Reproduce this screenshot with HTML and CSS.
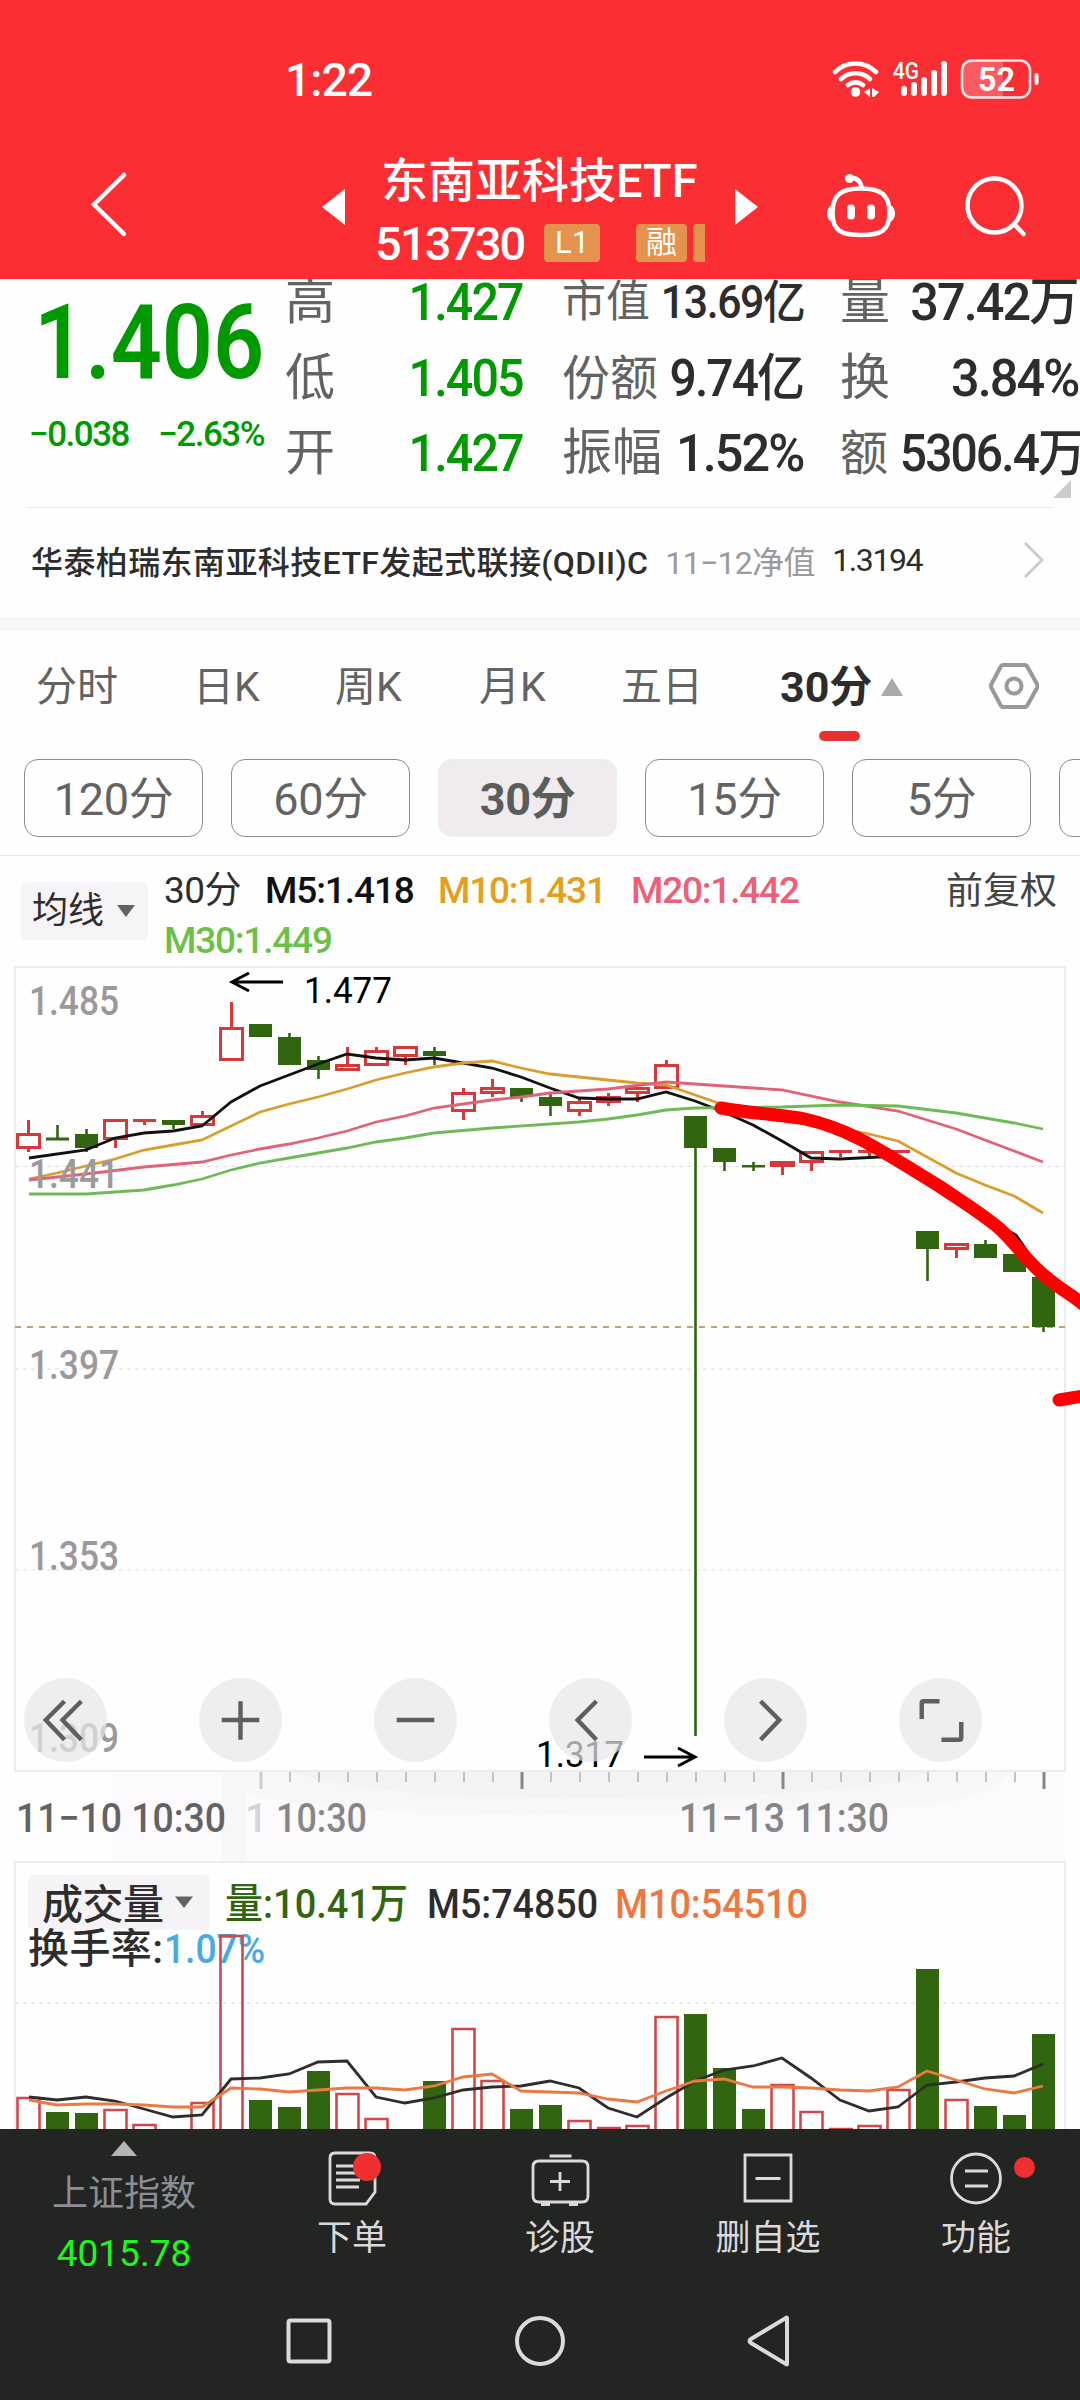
FILE: index.html
```html
<!DOCTYPE html>
<html lang="zh-CN">
    <head>
        <meta charset="utf-8">
        <title>东南亚科技ETF</title>
        <link rel="stylesheet" href="styles.css">
    </head>
    <body>
        <header class="top">
            <div class="status">
                <span class="clock">1:22</span>
                <svg class="status-icons" width="210" height="44" viewBox="830 58 210 44">
                    <g fill="none" stroke="#fff" stroke-width="4.6" stroke-linecap="round">
                        <path d="M835 72a29 29 0 0 1 41 0M841 79a21 21 0 0 1 29 0M848 85a12 12 0 0 1 15 0"/>
                        <path stroke-width="6" d="M904 89v4M914 85v8M924 80v13M934 73v20M944 64v29"/>
                    </g>
                    <circle cx="855.500" cy="92" r="4.800" fill="#fff"/>
                    <path fill="#fff" d="M864 92l6-4v9zM872 88l7 4-5 5h-2z"/>
                    <text class="net" x="893" y="79" textLength="26" lengthAdjust="spacingAndGlyphs">4G</text>
                    <path fill="#fff" fill-opacity=".22" d="M963 69q0-8 8-8h32v37h-32q-8 0-8-8z"/>
                    <rect x="962" y="60.500" width="68" height="37" rx="10" fill="none" stroke="#fff" stroke-opacity=".9" stroke-width="2.600"/>
                    <path stroke="#fff" stroke-width="4" stroke-linecap="round" d="M1036.500 75v8"/>
                    <text class="bat" x="978" y="91" textLength="37" lengthAdjust="spacingAndGlyphs">52</text>
                </svg>
            </div>
            <div class="bar">
                <svg class="back" width="44" height="70" viewBox="86 170 44 70"><path d="M124 175l-30 29.500 30 29.500"/></svg>
                <svg class="prev" width="23" height="36" viewBox="0 0 23 36"><path d="M0 18L23 0v36z"/></svg>
                <div class="title">
                    <h1>东南亚科技ETF</h1>
                    <div class="code">
                        <span class="num">513730</span>
                        <i class="tag tag-l1">L1</i>
                        <i class="tag tag-rong">融</i>
                        <i class="tag tag-cut"></i>
                    </div>
                </div>
                <svg class="next" width="23" height="36" viewBox="0 0 23 36"><path d="M23 18L0 0v36z"/></svg>
                <svg class="robot" width="72" height="70" viewBox="825 170 72 70">
                    <path d="M861 188.500c21 0 28.500 7 28.500 24.500S881 235 861 235s-28.500-4.500-28.500-22S840 188.500 861 188.500zM861.500 187c-1-6-5-9.500-12-9.500"/>
                    <path class="eye" d="M851 208.500v7M871 208.500v7"/>
                    <circle cx="849.500" cy="178.500" r="4.500"/>
                    <path class="ear" d="M833 205c-8 1-8 16 0 17zM889 205c8 1 8 16 0 17z"/>
                </svg>
                <svg class="search" width="68" height="70" viewBox="962 170 68 70"><circle cx="994.500" cy="205.500" r="27"/><path d="M1014 224l9.500 10"/></svg>
            </div>
        </header>

        <section class="quote">
            <div class="price">
                <div class="last"><span>1.406</span></div>
                <div class="chg"><span>−0.038</span><span>−2.63%</span></div>
            </div>
            <div class="cell c1"><p><em>高</em><b>1.427</b></p><p><em>低</em><b>1.405</b></p><p><em>开</em><b>1.427</b></p></div>
            <div class="cell c2"><p class="sm"><em>市值</em><b>13.69亿</b></p><p class="md"><em>份额</em><b>9.74亿</b></p><p class="wide"><em>振幅</em><b>1.52%</b></p></div>
            <div class="cell c3"><p class="wide"><em>量</em><b>37.42万</b></p><p class="wide"><em>换</em><b>3.84%</b></p><p class="md"><em>额</em><b>5306.4万</b></p></div>
            <i class="corner"></i>
        </section>
        <section class="fund">
            <span class="fund-name">华泰柏瑞东南亚科技ETF发起式联接(QDII)C</span>
            <span class="fund-date">11−12净值</span>
            <span class="fund-val">1.3194</span>
            <svg width="24" height="40" viewBox="0 0 24 40"><path d="M2 3l17 17L2 37"/></svg>
        </section>

        <nav class="tabs">
            <a>分时</a><a>日K</a><a>周K</a><a>月K</a><a>五日</a>
            <a class="on">30分<i></i></a>
            <svg width="50" height="50" viewBox="0 0 50 50"><path d="M14.500 4h21q2 0 3 2l9.500 17q1 2 0 4l-9.500 17q-1 2-3 2h-21q-2 0-3-2L2.500 27q-1-2 0-4L11.500 6q1-2 3-2z"/><circle cx="25" cy="25" r="7.500"/></svg>
        </nav>
        <div class="chips">
            <a>120分</a><a>60分</a><a class="on">30分</a><a>15分</a><a>5分</a><a></a>
        </div>

        <section class="ma">
            <span class="select">均线<i></i></span>
            <div class="ma-list">
                <span class="dark">30分</span><span class="m5">M5:1.418</span><span class="m10">M10:1.431</span><span class="m20">M20:1.442</span>
                <span class="m30">M30:1.449</span>
            </div>
            <span class="fq">前复权</span>
        </section>

        <section class="chart">
            <svg width="1080" height="896" viewBox="0 966 1080 896">
                <!-- time axis strip -->
                <path fill="#fdfafe" d="M112 1772h953v90H112z"/>
                <path fill="#f7f7f8" d="M222 1772h788c-30 36-100 38-230 38-200 4-400 12-534-16v68h-24z"/>
                <path fill="#f5f2f6" d="M290 1772h640c-60 22-200 24-320 26-120 2-250-4-320-26z"/>
                <!-- grid -->
                <rect x="15" y="967" width="1050" height="804" fill="#fefefe" stroke="#ececec" stroke-width="2"/>
                <path stroke="#ddd" stroke-width="1" stroke-dasharray="4 4" d="M15 1166.500h1050"/>
                <path stroke="#ededed" stroke-width="2" stroke-dasharray="4 4" d="M15 1369h1050M15 1570h1050"/>
                <path stroke="#c0a27a" stroke-width="2" stroke-dasharray="6 6" d="M15 1327h1050"/>
                <!-- falling -->
                <path stroke="#316510" stroke-width="2.600" d="M57.500 1125v15M86.500 1129v23M173.500 1125v4M289.500 1033v8M318.500 1056v23M434.500 1047v18M521.500 1095v7M550.500 1094v22M695.500 1140v596M724.500 1160v11M753.500 1162v9M927.500 1245v36M985.500 1240v8M1043.500 1320v12"/>
                <path fill="#316510" d="M46 1137.500h23v3H46zM75 1134h23v14H75zM162 1120h23v5h-23zM249 1024h23v13h-23zM278 1037h23v28h-23zM307 1060h23v10h-23zM423 1051h23v5h-23zM510 1088h23v9h-23zM539 1097h23v9h-23zM684 1116h23v32h-23zM713 1148h23v14h-23zM742 1165h23v2.500h-23zM916 1231h23v18h-23zM974 1244h23v14h-23zM1003 1254h23v18h-23zM1032 1277h23v50h-23z"/>
                <!-- rising -->
                <path fill="none" stroke="#d6393a" stroke-width="3" d="M28.500 1120v13M28.500 1149v3M115.500 1140v8M144.500 1121v4M202.500 1111v4M231.500 1002v25M347.500 1047v17M376.500 1047v3M405.500 1057v8M463.500 1088v4M463.500 1112v8M492.500 1079v8M492.500 1094v3M579.500 1098v3M579.500 1112v4M608.500 1093v13M637.500 1094v8M666.500 1060v4M782.500 1167v8M811.500 1163v8M840.500 1152v5M869.500 1152v4M956.500 1250v8M133 1120.500h23M829 1151.500h23M858 1151.500h23M887 1151.500h23"/>
                <path fill="none" stroke="#d6393a" stroke-width="3" d="M17.500 1134.500h22v13h-22zM104.500 1120.500h22v18h-22zM191.500 1116.500h22v8h-22zM220.500 1028.500h22v31h-22zM336.500 1065.500h22v4h-22zM365.500 1051.500h22v13h-22zM394.500 1047.500h22v8h-22zM452.500 1093.500h22v17h-22zM481.500 1088.500h22v4h-22zM568.500 1102.500h22v8h-22zM597.500 1097.500h22v4h-22zM626.500 1088.500h22v4h-22zM655.500 1065.500h22v22h-22zM771.500 1162.500h22v3h-22zM800.500 1152.500h22v9h-22zM945.500 1244.500h22v4h-22z"/>
                <!-- moving averages -->
                <g fill="none" stroke-width="2.800">
                    <path stroke="#111" d="M29 1158L86 1150 115 1138 144 1133 173 1131 202 1126 231 1102 260 1086 289 1075 318 1064 347 1054 376 1058 405 1060 434 1058 463 1063 492 1068 521 1077 550 1088 579 1098 608 1099 637 1099 666 1092 695 1101 724 1112 753 1125 782 1141 811 1158 840 1159 898 1156 985 1218 1016 1235 1043 1274"/>
                    <path stroke="#d99e2b" d="M29 1179L57 1173 86 1166 115 1159 144 1150 173 1145 202 1140 231 1126 260 1112 289 1104 318 1097 347 1089 376 1080 405 1073 434 1067 463 1063 492 1061 521 1068 550 1074 579 1077 608 1080 637 1083 666 1085 695 1095 724 1105 869 1134 898 1141 927 1157 956 1173 985 1185 1014 1196 1043 1213"/>
                    <path stroke="#e06377" d="M29 1180L86 1174 144 1167 202 1162 231 1155 260 1149 289 1144 318 1138 347 1131 376 1122 405 1116 434 1108 463 1104 492 1100 521 1097 550 1093 608 1089 666 1082 782 1090 840 1102 898 1111 956 1129 1014 1151 1043 1162"/>
                    <path stroke="#70b957" d="M29 1194H86L144 1190 173 1185 202 1179 231 1170 260 1163 289 1158 318 1153 347 1148 376 1142 405 1138 434 1133 492 1128 550 1124 579 1122 608 1119 637 1115 666 1110 695 1108 782 1107 840 1105 898 1106 956 1113 1014 1123 1043 1129"/>
                </g>
                <g class="axis">
                    <text x="29" y="1015" textLength="90" lengthAdjust="spacingAndGlyphs">1.485</text>
                    <text x="29" y="1188" textLength="90" lengthAdjust="spacingAndGlyphs">1.441</text>
                    <text x="29" y="1379" textLength="90" lengthAdjust="spacingAndGlyphs">1.397</text>
                    <text x="29" y="1570" textLength="90" lengthAdjust="spacingAndGlyphs">1.353</text>
                    <text x="29" y="1752" textLength="90" lengthAdjust="spacingAndGlyphs">1.309</text>
                </g>
                <g class="mark">
                    <text x="304" y="1003" textLength="88" lengthAdjust="spacingAndGlyphs">1.477</text>
                    <text x="536" y="1767" textLength="88" lengthAdjust="spacingAndGlyphs">1.317</text>
                    <path d="M283 982h-50M249 973l-17 9 17 9M644 1757h50M678 1748l17 9-17 9"/>
                </g>
                <!-- axis ticks -->
                <path stroke="#c4c3c4" stroke-width="2" d="M290 1772v10M319 1772v10M348 1772v10M377 1772v10M406 1772v10M435 1772v10M464 1772v10M493 1772v10M551 1772v10M580 1772v10M609 1772v10M638 1772v10M667 1772v10M696 1772v10M725 1772v10M754 1772v10M812 1772v10M841 1772v10M870 1772v10M899 1772v10M928 1772v10M957 1772v10M986 1772v10M1015 1772v10"/>
                <path stroke="#868686" stroke-width="3" d="M522 1772v17M783 1772v17M1044 1772v17"/>
                <path stroke="#cfcbd0" stroke-width="3" d="M261 1772v17"/>
                <g class="time">
                    <text x="16" y="1832" textLength="210" lengthAdjust="spacingAndGlyphs" fill="#636363">11−10 10:30</text>
                    <text x="245" y="1832" fill="#d5d5d5">1</text>
                    <text x="276" y="1832" textLength="91" lengthAdjust="spacingAndGlyphs">10:30</text>
                    <text x="679" y="1832" textLength="210" lengthAdjust="spacingAndGlyphs">11−13 11:30</text>
                </g>
                <!-- hand drawn stroke -->
                <path fill="none" stroke="#f00" stroke-width="13" stroke-linecap="round" d="M721 1108C755 1114 785 1115 805 1119 850 1129 880 1150 939 1186 975 1210 985 1216 1000 1229 1018 1246 1028 1263 1046 1277 1060 1289 1072 1295 1084 1305M1059 1400l30-5"/>
            </svg>
            <div class="tools">
                <a><svg viewBox="0 0 84 84"><path d="M41 23L22 42l19 20M58 23L39 42l19 20"/></svg></a>
                <a><svg viewBox="0 0 84 84"><path d="M23 42h38M42 23v39"/></svg></a>
                <a><svg viewBox="0 0 84 84"><path d="M23 42h38"/></svg></a>
                <a><svg viewBox="0 0 84 84"><path d="M48 23L29 42l19 20"/></svg></a>
                <a><svg viewBox="0 0 84 84"><path d="M37 23l19 19-19 20"/></svg></a>
                <a><svg viewBox="0 0 84 84"><path d="M23 41V25q0-2 2-2h16M43 62h18q2 0 2-2V44"/></svg></a>
            </div>
        </section>

        <section class="volume">
            <svg width="1080" height="268" viewBox="0 1861 1080 268">
                <path fill="none" stroke="#ececec" stroke-width="2" d="M15 2140V1862h1050v278"/>
                <path stroke="#ededed" stroke-width="2" stroke-dasharray="4 4" d="M15 2003h1050"/>
                <rect class="sel" x="28" y="1875" width="182" height="55" rx="6"/>
                <path fill="#636363" d="M175 1896.500h18l-9 11.500z"/>
                <text class="dark" x="42" y="1919" textLength="122">成交量</text>
                <text class="vol" x="225" y="1918" textLength="183" lengthAdjust="spacingAndGlyphs">量:10.41万</text>
                <text class="dark" x="427" y="1918" textLength="171" lengthAdjust="spacingAndGlyphs">M5:74850</text>
                <text class="m10v" x="615" y="1918" textLength="193" lengthAdjust="spacingAndGlyphs">M10:54510</text>
                <text class="dark" x="28" y="1963" textLength="135">换手率:</text>
                <text class="rate" x="164" y="1963" textLength="101" lengthAdjust="spacingAndGlyphs">1.07%</text>
                <path fill="#316510" d="M46 2112h23v40H46zM75 2113h23v40H75zM249 2100h23v40h-23zM278 2107h23v40h-23zM307 2071h23v80h-23zM423 2081h23v80h-23zM510 2109h23v40h-23zM539 2105h23v40h-23zM684 2014h23v140h-23zM713 2068h23v80h-23zM742 2109h23v40h-23zM916 1969h23v180h-23zM974 2106h23v40h-23zM1003 2115h23v40h-23zM1032 2034h23v100h-23z"/>
                <path fill="none" stroke="#d0494a" stroke-width="2.600" d="M17.500 2140v-42h22v42M104.500 2140v-30h22v30M133.500 2140v-15h22v15M191.500 2140v-37h22v37M220.500 2140V1936h22v204M336.500 2140v-46h22v46M365.500 2140v-21h22v21M452.500 2140v-111h22v111M481.500 2140v-59h22v59M568.500 2140v-19h22v19M597 2128h24M626.500 2140v-14h22v14M655.500 2140v-123h22v123M771.500 2140v-55h22v55M800.500 2140v-28h22v28M829 2129h24M858.500 2140v-14h22v14M887.500 2140v-50h22v50M945.500 2140v-40h22v40"/>
                <g fill="none" stroke-width="2.800">
                    <path stroke="#2d2d2d" d="M29 2097L57 2100 86 2097 115 2101 144 2109 173 2117 202 2115 231 2079 260 2078 289 2074 318 2062 347 2061 376 2097 405 2103 434 2098 463 2090 492 2087 521 2086 550 2081 579 2088 608 2108 637 2117 666 2098 695 2081 724 2070 753 2066 782 2058 811 2078 840 2100 869 2111 898 2107 927 2085 956 2082 985 2078 1014 2076 1043 2064"/>
                    <path stroke="#ec7843" d="M29 2100L57 2105 86 2104H115L144 2105 173 2107H202L231 2088 260 2089 289 2092 318 2090 347 2088H376L405 2090 434 2086 463 2077 492 2074 521 2091 550 2092 579 2093 608 2099 637 2102 666 2091 695 2081 724 2079 753 2087H782L811 2088 840 2090 869 2091 898 2087 927 2071 956 2080 985 2089 1014 2093 1043 2086"/>
                </g>
            </svg>
        </section>

        <footer class="foot">
            <div class="index">
                <i></i>
                <span>上证指数</span>
                <strong>4015.78</strong>
            </div>
            <a><svg viewBox="322 2148 60 64"><path d="M335 2154h35q5 0 5 5v34l-9 12h-31q-5 0-5-5v-41q0-5 5-5zM336 2167h20M336 2174h21M336 2181h24M336 2188h23"/><circle class="dot" cx="367" cy="2168" r="14"/></svg>下单</a>
            <a><svg viewBox="529 2148 60 64"><path d="M538 2162h43q6 0 6 6v29q0 6-6 6h-43q-6 0-6-6v-29q0-6 6-6zM548.500 2157h22M559 2173v19M549 2182.500h20"/><path stroke-width="4" d="M540 2205h9M568 2205h9"/></svg>诊股</a>
            <a><svg viewBox="737 2148 60 64"><path d="M744 2156h46v46h-46zM754.500 2179.500h25"/></svg>删自选</a>
            <a><svg viewBox="945 2148 60 64"><circle cx="975" cy="2179.500" r="24.500"/><path d="M964 2172h23M964 2187h23"/></svg>功能<i class="badge"></i></a>
        </footer>
        <div class="sysnav">
            <svg viewBox="0 0 1080 60"><rect x="288.500" y="10.500" width="41" height="41" rx="2"/><circle cx="540" cy="31" r="23"/><path d="M787 8v46q0 1-1 0l-35-21q-3-2 0-4l35-21q1-1 1 0z"/></svg>
        </div>
    </body>
</html>
```
FILE: styles.css
```css
* {
    margin: 0;
    padding: 0;
    box-sizing: border-box;
}
body {
    width: 1080px;
    height: 2400px;
    overflow: hidden;
    background: #fefefe;
    color: #2d2d2d;
    font-family: Roboto, "Noto Sans CJK SC", sans-serif;
}
i, em {
    font-style: normal;
}
svg {
    display: block;
    flex: none;
}

/* header */
.top {
    height: 279px;
    background: #fa2e33;
    color: #fff;
}
.status {
    display: flex;
    height: 104px;
    padding: 58px 0 0 285px;
}
.clock {
    width: 545px;
    font-size: 46px;
    font-weight: 500;
    line-height: 45px;
    letter-spacing: -.800px;
}
.net {
    font-size: 24px;
    font-weight: 500;
    fill: #fff;
}
.bat {
    font-size: 33px;
    font-weight: 700;
    fill: #fff;
}
.bar {
    display: flex;
    height: 175px;
    padding-left: 86px;
}
.bar svg {
    margin-top: 66px;
    fill: none;
    stroke: #fff;
    stroke-width: 4.5;
    stroke-linecap: round;
}
.bar .prev, .bar .next {
    margin-top: 85px;
    fill: #fff;
    stroke: none;
}
.bar .prev {
    margin-left: 192px;
}
.title {
    flex: none;
    width: 330px;
    margin: 50px 30px 0 30px;
}
.title h1 {
    height: 54px;
    padding-left: 6px;
    font-size: 47px;
    font-weight: 500;
    line-height: 54px;
    white-space: nowrap;
}
.code {
    display: flex;
    width: 330px;
    height: 70px;
    align-items: center;
    overflow: hidden;
}
.code .num {
    flex: none;
    width: 169px;
    font-size: 47px;
    font-weight: 500;
    letter-spacing: -1.800px;
}
.tag {
    flex: none;
    height: 38px;
    border-radius: 4px;
    background: #e4934f;
    font-size: 31px;
    line-height: 38px;
    text-align: center;
}
.tag-l1 {
    width: 56px;
    margin-right: 36px;
}
.tag-rong {
    width: 51px;
    margin-right: 6px;
}
.tag-cut {
    width: 50px;
}
.bar .robot {
    margin-left: 67px;
}
.bar .robot circle, .bar .robot .ear {
    fill: #fff;
    stroke: none;
}
.bar .robot .eye {
    stroke-width: 8;
}
.bar .search {
    margin-left: 65px;
}

/* quote */
.quote {
    display: flex;
    position: relative;
    height: 229px;
    overflow: hidden;
}
.quote::after {
    content: "";
    position: absolute;
    left: 28px;
    right: 28px;
    bottom: 0;
    height: 1px;
    background: #e8e8e8;
}
.price {
    width: 287px;
    color: #009a00;
}
.last {
    height: 125px;
    padding-left: 34px;
    font-size: 103px;
    font-weight: 600;
    line-height: 128px;
}
.last span {
    display: inline-block;
    transform: scaleX(.87);
    transform-origin: 0 0;
}
.chg {
    display: flex;
    padding-left: 29px;
    justify-content: space-between;
    width: 264px;
    font-size: 35px;
    font-weight: 500;
    line-height: 62px;
    letter-spacing: -1.500px;
}
.cell {
    height: 228px;
    margin-top: -14px;
}
.cell p {
    display: flex;
    height: 75.500px;
    justify-content: space-between;
    font-size: 50px;
    line-height: 75px;
    white-space: nowrap;
}
.cell em {
    color: #636363;
}
.cell b {
    font-size: 52px;
    font-weight: 500;
    letter-spacing: -2px;
    transform: scaleX(.93);
    transform-origin: 100% 0;
}
.cell .wide b {
    transform: scaleX(.97);
}
.cell .md em {
    font-size: 48px;
}
.cell .md b {
    font-size: 51px;
    transform: scaleX(.94);
}
.cell .sm {
    font-size: 44px;
}
.cell .sm b {
    font-size: 46px;
    letter-spacing: -1.500px;
}
.c1 {
    width: 236px;
}
.c1 em {
    margin-left: -2px;
}
.c1 b {
    color: #009a00;
}
.c2 {
    width: 241px;
    margin-left: 39px;
}
.c3 {
    width: 238px;
    margin-left: 37px;
}
.corner {
    position: absolute;
    right: 9px;
    bottom: 10px;
    border: solid transparent;
    border-width: 18px 0 0 18px;
    border-bottom: 18px solid #ccc;
    border-top: 0;
}
.fund {
    display: flex;
    height: 123px;
    padding: 0 33px 6px 31px;
    align-items: center;
    font-size: 32px;
    border-bottom: 14px solid #f6f6f6;
    white-space: nowrap;
}
.fund-name {
    width: 635px;
    font-weight: 500;
    letter-spacing: .400px;
}
.fund-date {
    width: 167px;
    color: #9b999b;
    letter-spacing: -.700px;
}
.fund-val {
    width: 191px;
    letter-spacing: -1.400px;
}
.fund svg {
    fill: none;
    stroke: #ccc;
    stroke-width: 3;
}

/* period tabs */
.tabs {
    display: grid;
    grid-template-columns: 157px 142px 144px 142px 159px 209px 50px;
    height: 128px;
    padding: 30px 0 0 36px;
    color: #636363;
    font-size: 41px;
    line-height: 52px;
}
.tabs .on {
    position: relative;
    color: #2d2d2d;
    font-size: 43px;
    font-weight: 700;
}
.tabs .on i {
    display: inline-block;
    margin: 0 0 6px 9px;
    border: 11px solid transparent;
    border-top: 0;
    border-bottom: 18px solid #aaa8aa;
}
.tabs .on::after {
    content: "";
    position: absolute;
    left: 39px;
    top: 70px;
    width: 41px;
    height: 10px;
    border-radius: 5px;
    background: #ea3030;
}
.tabs svg {
    fill: none;
    stroke: #999;
    stroke-width: 4;
}
.chips {
    display: flex;
    gap: 28px;
    height: 97px;
    padding-left: 24px;
    overflow: hidden;
    border-bottom: 1px solid #e8e8e8;
}
.chips a {
    flex: none;
    width: 179px;
    height: 78px;
    border: 1px solid #8c8c8c;
    border-radius: 14px;
    color: #636363;
    font-size: 45px;
    line-height: 79px;
    letter-spacing: -.300px;
    text-align: center;
}
.chips .on {
    border-color: #efebef;
    background: #efebef;
    color: #5a5d5a;
    font-weight: 700;
}

/* average line legend */
.ma {
    display: flex;
    height: 110px;
    padding: 0 21px;
    line-height: 48px;
    font-size: 37px;
    white-space: nowrap;
}
.select {
    width: 127px;
    height: 58px;
    margin: 26px 16px 0 0;
    padding-left: 11px;
    border-radius: 6px;
    background: #f7f4f8;
    font-size: 36px;
    line-height: 59px;
}
.select i {
    display: inline-block;
    margin: 0 0 6px 13px;
    border: 9px solid transparent;
    border-bottom: 0;
    border-top: 12px solid #636363;
}
.ma-list {
    display: grid;
    grid-template-columns: 101px 173px 193px 200px;
    width: 782px;
    padding-top: 11px;
    font-weight: 500;
    letter-spacing: -1.200px;
}
.ma-list .dark {
    font-weight: 400;
    letter-spacing: -.500px;
}
.m5 {
    color: #111;
    letter-spacing: -1.100px;
}
.m10 {
    color: #e3a01b;
}
.m20 {
    color: #ee6077;
}
.m30 {
    color: #6cc04a;
}
.fq {
    padding-top: 12px;
    color: #444;
}

/* charts */
.chart {
    position: relative;
    height: 896px;
}
.chart text {
    font-size: 40px;
    font-weight: 500;
}
.axis {
    fill: #9b999b;
}
.mark {
    stroke: #000;
    stroke-width: 3;
    fill: none;
}
.chart .mark text {
    font-size: 37px;
    font-weight: 400;
    stroke: none;
    fill: #000;
}
.time {
    fill: #868686;
}
.tools {
    position: absolute;
    left: 24px;
    top: 712px;
    display: flex;
    gap: 92px;
}
.tools a {
    width: 83px;
    height: 84px;
    border-radius: 50%;
    background: rgba(231, 231, 231, .714);
}
.tools svg {
    width: 83px;
    height: 84px;
    fill: none;
    stroke: #5f5f5f;
    stroke-width: 4.5;
}
.volume {
    position: relative;
    height: 268px;
    margin-top: -1px;
    overflow: hidden;
}
.volume text {
    font-size: 41px;
    font-weight: 500;
}
.volume .sel {
    fill: #f6f3f7;
}
.volume .dark {
    fill: #2d2d2d;
}
.volume .vol {
    fill: #316510;
}
.volume .m10v {
    fill: #f07640;
}
.volume .rate {
    fill: #48a9e6;
}

/* bottom */
.foot {
    display: flex;
    height: 160px;
    background: #222522;
    color: #dcd9dc;
}
.index {
    width: 248px;
    padding-top: 12px;
    text-align: center;
}
.index i {
    display: block;
    width: 26px;
    margin: 0 auto;
    border: 13px solid transparent;
    border-top: 0;
    border-bottom: 15px solid #b5b5b5;
}
.index span {
    display: block;
    height: 73px;
    color: #8b8f95;
    font-size: 36px;
    line-height: 77px;
}
.index strong {
    display: block;
    color: #1cfa1c;
    font-size: 37px;
    font-weight: 400;
    line-height: 50px;
}
.foot a {
    position: relative;
    width: 208px;
    padding-top: 18px;
    font-size: 35px;
    line-height: 56px;
    text-align: center;
}
.foot a svg {
    width: 60px;
    height: 64px;
    margin: 0 auto;
    fill: none;
    stroke: #dcd9dc;
    stroke-width: 2.8;
}
.foot .dot {
    fill: #f03030;
    stroke: none;
}
.badge {
    position: absolute;
    right: 45px;
    top: 28px;
    width: 21px;
    height: 21px;
    border-radius: 50%;
    background: #f03030;
}
.sysnav {
    height: 111px;
    padding-top: 21px;
    background: #222522;
}
.sysnav svg {
    width: 1080px;
    height: 60px;
    fill: none;
    stroke: #dcd9dc;
    stroke-width: 4;
}
```
